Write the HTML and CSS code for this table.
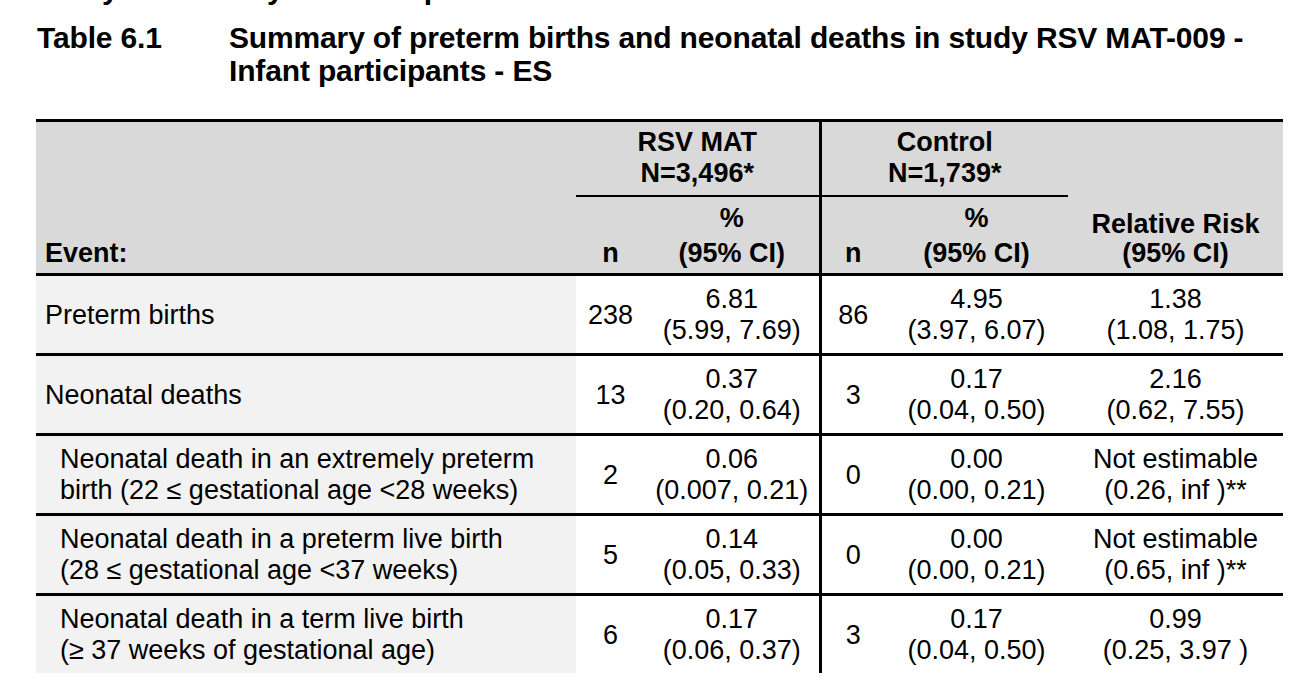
FILE: index.html
```html
<!DOCTYPE html>
<html lang="en">
<head>
<meta charset="utf-8">
<title>Table 6.1</title>
<link rel="stylesheet" href="styles.css">
</head>
<body>
<div class="cut"><div class="cut-line">Analysis in study of all the phase</div></div>
<div class="title">
  <div class="title-num">Table 6.1</div>
  <div class="title-text">Summary of preterm births and neonatal deaths in study RSV MAT-009 -<br>Infant participants - ES</div>
</div>
<div class="table-wrap">
<table class="sum">
  <colgroup>
    <col class="c-event">
    <col class="c-n1">
    <col class="c-p1">
    <col class="c-n2">
    <col class="c-p2">
    <col class="c-rr">
  </colgroup>
  <thead>
    <tr class="h1">
      <th rowspan="2" class="ev-h">Event:</th>
      <th colspan="2" class="grp grp-a">RSV MAT<br>N=3,496*</th>
      <th colspan="2" class="grp">Control<br>N=1,739*</th>
      <th rowspan="2" class="rr-h">Relative Risk<br>(95% CI)</th>
    </tr>
    <tr class="h2">
      <th class="nh">n</th>
      <th class="ph sep">%<br>(95% CI)</th>
      <th class="nh">n</th>
      <th class="ph">%<br>(95% CI)</th>
    </tr>
  </thead>
  <tbody>
    <tr>
      <td class="ev">Preterm births</td>
      <td class="num">238</td>
      <td class="num sep">6.81<br>(5.99, 7.69)</td>
      <td class="num">86</td>
      <td class="num">4.95<br>(3.97, 6.07)</td>
      <td class="num">1.38<br>(1.08, 1.75)</td>
    </tr>
    <tr>
      <td class="ev">Neonatal deaths</td>
      <td class="num">13</td>
      <td class="num sep">0.37<br>(0.20, 0.64)</td>
      <td class="num">3</td>
      <td class="num">0.17<br>(0.04, 0.50)</td>
      <td class="num">2.16<br>(0.62, 7.55)</td>
    </tr>
    <tr>
      <td class="ev sub">Neonatal death in an extremely preterm birth (22 ≤ gestational age &lt;28 weeks)</td>
      <td class="num">2</td>
      <td class="num sep">0.06<br>(0.007, 0.21)</td>
      <td class="num">0</td>
      <td class="num">0.00<br>(0.00, 0.21)</td>
      <td class="num">Not estimable<br>(0.26, inf )**</td>
    </tr>
    <tr>
      <td class="ev sub">Neonatal death in a preterm live birth<br>(28 ≤ gestational age &lt;37 weeks)</td>
      <td class="num">5</td>
      <td class="num sep">0.14<br>(0.05, 0.33)</td>
      <td class="num">0</td>
      <td class="num">0.00<br>(0.00, 0.21)</td>
      <td class="num">Not estimable<br>(0.65, inf )**</td>
    </tr>
    <tr class="last">
      <td class="ev sub">Neonatal death in a term live birth<br>(≥ 37 weeks of gestational age)</td>
      <td class="num">6</td>
      <td class="num sep">0.17<br>(0.06, 0.37)</td>
      <td class="num">3</td>
      <td class="num">0.17<br>(0.04, 0.50)</td>
      <td class="num">0.99<br>(0.25, 3.97 )</td>
    </tr>
  </tbody>
</table>
</div>
</body>
</html>
```
FILE: styles.css
```css
html, body {
  margin: 0;
  padding: 0;
  background: #ffffff;
  color: #000000;
  font-family: "Liberation Sans", Arial, sans-serif;
}

.cut {
  height: 21px;
  overflow: hidden;
}

.cut-line {
  margin-top: -28px;
  padding-left: 37px;
  font-weight: bold;
  font-size: 30px;
  line-height: 33px;
  white-space: nowrap;
}

.title {
  display: flex;
  padding-left: 37px;
  font-weight: bold;
  font-size: 30px;
  line-height: 33px;
  letter-spacing: -0.15px;
}

.title-num {
  flex: none;
  width: 192px;
}

.title-text {
  white-space: nowrap;
}

.table-wrap {
  margin: 32px 0 0 36px;
}

.sum {
  border-collapse: collapse;
  table-layout: fixed;
  width: 1247px;
  font-size: 27px;
  line-height: 31px;
}

.c-event { width: 540px; }
.c-n1 { width: 69px; }
.c-p1 { width: 175px; }
.c-n2 { width: 65px; }
.c-p2 { width: 183px; }
.c-rr { width: 215px; }

.sum th {
  background: #d9d9d9;
  font-weight: bold;
  text-align: center;
  padding: 0;
}

.h1 th {
  border-top: 3px solid #000;
  height: 75px;
  vertical-align: top;
  padding-top: 5px;
  box-sizing: border-box;
}

.h1 .grp {
  border-bottom: 2px solid #000;
}

.h1 .grp-a {
  border-right: 3px solid #000;
}

.sum th.ev-h {
  text-align: left;
  vertical-align: bottom;
  padding: 0 0 4px 9px;
}

.sum th.rr-h {
  vertical-align: bottom;
  line-height: 29px;
  padding: 0 0 5px 0;
}

.h2 th {
  vertical-align: bottom;
  height: 79px;
  box-sizing: border-box;
}

.h2 th.nh {
  padding-bottom: 4px;
}

.h2 th.ph {
  line-height: 35px;
  padding-bottom: 2px;
}

thead tr.h2 th,
thead th.ev-h,
thead th.rr-h {
  border-bottom: 3px solid #000;
}

.sep {
  border-right: 3px solid #000;
}

.sum td {
  padding: 8px 0 7px 0;
  vertical-align: middle;
  border-bottom: 3px solid #000;
}

.sum tr.last td {
  border-bottom: none;
}

.sum td.ev {
  background: #f2f2f2;
  padding-left: 9px;
  text-align: left;
}

.sum td.sub {
  padding-left: 24px;
  padding-right: 20px;
}

.sum td.num {
  text-align: center;
  white-space: nowrap;
}
```
